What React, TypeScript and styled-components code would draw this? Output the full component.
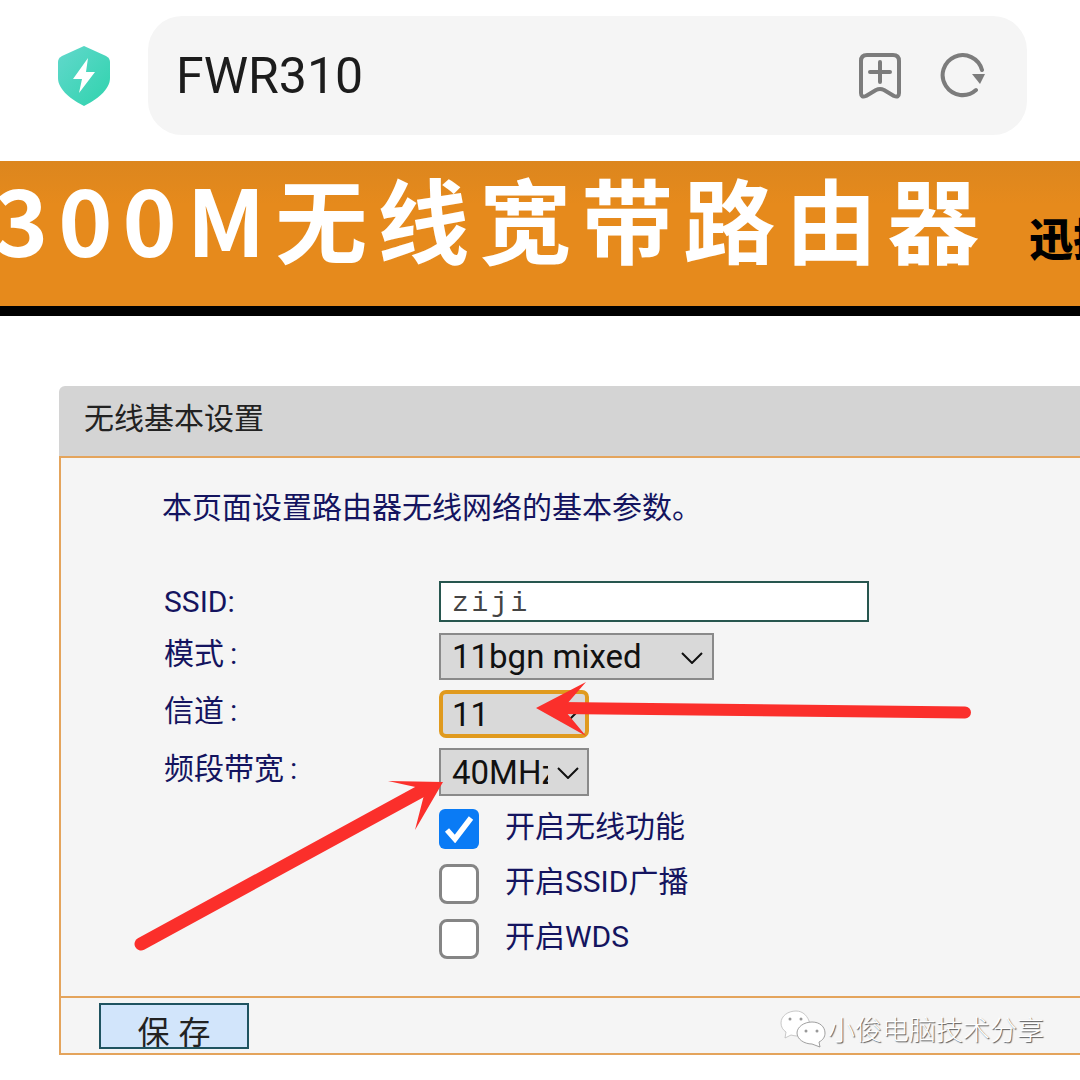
import React from "react";
import styled, { createGlobalStyle } from "styled-components";

const GlobalStyle = createGlobalStyle`
  html, body {
    margin: 0;
    padding: 0;
    background: #ffffff;
  }
  * {
    box-sizing: border-box;
  }
`;

const CJK = `"Roboto", "Noto Sans CJK SC", sans-serif`;

const Page = styled.div`
  position: relative;
  width: 1080px;
  height: 1080px;
  overflow: hidden;
  background: #ffffff;
  font-family: ${CJK};
`;

const AddressRow = styled.div`
  display: flex;
  align-items: center;
  padding: 16px 53px 0 58px;
`;

const ShieldSlot = styled.div`
  display: flex;
  width: 90px;
  flex: none;
`;

const AddressBar = styled.div`
  flex: 1;
  height: 119px;
  display: flex;
  align-items: center;
  padding: 0 41px 0 28px;
  background: #f5f5f5;
  border-radius: 34px;
`;

const AddressText = styled.div`
  flex: 1;
  font-size: 50px;
  color: #1c1c1c;
`;

const AddressIcons = styled.div`
  display: flex;
  align-items: center;
  gap: 38px;
`;

const Banner = styled.div`
  margin-top: 26px;
  height: 155px;
  padding-bottom: 33px;
  display: flex;
  align-items: center;
  background: linear-gradient(#dc861e, #e68a1c 30%);
  border-bottom: 10px solid #000000;
  white-space: nowrap;
  overflow: hidden;
`;

const BannerTitle = styled.div`
  margin-left: -6px;
  font-family: "Noto Sans CJK SC", sans-serif;
  font-size: 92px;
  line-height: 100px;
  font-weight: 700;
  letter-spacing: 10px;
  color: #ffffff;
  flex: none;
`;

const BannerBrand = styled.div`
  margin: 40px 0 0 40px;
  font-family: "Noto Sans CJK SC", sans-serif;
  font-size: 44px;
  line-height: 60px;
  font-weight: 900;
  color: #000000;
  flex: none;
`;

const Panel = styled.div`
  margin: 70px 0 0 59px;
  width: 1100px;
`;

const PanelTitle = styled.div`
  height: 70px;
  padding: 0 0 10px 25px;
  display: flex;
  align-items: center;
  background: #d4d4d4;
  border-radius: 6px 0 0 0;
  font-family: "Noto Sans CJK SC", sans-serif;
  font-size: 30px;
  color: #222222;
`;

const PanelBody = styled.div`
  height: 540px;
  padding: 30px 0 0 101px;
  background: #f5f5f5;
  border-left: 2px solid #e4a45c;
  border-top: 2px solid #e4a45c;
`;

const Intro = styled.div`
  height: 40px;
  line-height: 40px;
  font-size: 30px;
  color: #14145f;
`;

const Form = styled.div`
  margin-top: 53px;
  display: flex;
  flex-direction: column;
  margin-left: 1px;
`;

const Row = styled.div<{ $height: number; $gap: number }>`
  display: flex;
  align-items: center;
  height: ${(p) => p.$height}px;
  margin-bottom: ${(p) => p.$gap}px;
`;

const Label = styled.div<{ $lift?: number }>`
  width: 276px;
  flex: none;
  margin-top: ${(p) => p.$lift ?? 0}px;
  padding-left: 1px;
  font-size: 30px;
  color: #14145f;
`;

const TextField = styled.div`
  width: 430px;
  height: 41px;
  padding: 3px 0 0 11px;
  display: flex;
  align-items: center;
  background: #ffffff;
  border: 2px solid #27564f;
  font-family: "Liberation Mono", monospace;
  font-size: 28px;
  letter-spacing: 2.7px;
  color: #444444;
`;

const Select = styled.div<{ $width: number; $focus?: boolean }>`
  position: relative;
  width: ${(p) => p.$width}px;
  height: 100%;
  padding-left: ${(p) => (p.$focus ? "9px" : "11px")};
  display: flex;
  align-items: center;
  background: #d9d9d9;
  border: ${(p) => (p.$focus ? "4px solid #e09a1e" : "2px solid #8a8a8a")};
  border-radius: ${(p) => (p.$focus ? "7px" : "0")};
  font-size: 33px;
  color: #111111;
`;

const SelectValue = styled.div<{ $width: number }>`
  width: ${(p) => p.$width}px;
  overflow: hidden;
  white-space: nowrap;
`;

const Chevron = styled.svg<{ $right: number }>`
  position: absolute;
  right: ${(p) => p.$right}px;
  top: 50%;
  margin-top: -5px;
`;

const CheckRow = styled(Row)`
  padding-left: 276px;
`;

const Box = styled.div<{ $checked?: boolean }>`
  width: 40px;
  height: 40px;
  flex: none;
  display: flex;
  align-items: center;
  justify-content: center;
  background: ${(p) => (p.$checked ? "#0a7bf5" : "#ffffff")};
  border: ${(p) => (p.$checked ? "none" : "3px solid #858585")};
  border-radius: ${(p) => (p.$checked ? "6px" : "8px")};
`;

const CheckLabel = styled.div`
  margin: -10px 0 0 26px;
  font-size: 30px;
  color: #14145f;
`;

const PanelFooter = styled.div`
  height: 59px;
  padding: 5px 0 0 38px;
  background: #f5f5f5;
  border-left: 2px solid #e4a45c;
  border-top: 2px solid #e4a45c;
  border-bottom: 2px solid #e4a45c;
`;

const SaveButton = styled.div`
  width: 150px;
  height: 46px;
  padding: 2px 0 0 1px;
  overflow: hidden;
  text-align: center;
  background: #d2e5fb;
  border: 2px solid #1f5360;
  font-family: "Noto Sans CJK SC", sans-serif;
  font-size: 32px;
  line-height: 46px;
  letter-spacing: 1px;
  color: #222222;
  white-space: pre;
`;

const Annotation = styled.svg`
  position: absolute;
  left: 0;
  top: 0;
  pointer-events: none;
`;

const Watermark = styled.div`
  position: absolute;
  left: 780px;
  top: 1009px;
  display: flex;
  align-items: center;
  gap: 2px;
  font-family: "Noto Sans CJK SC", sans-serif;
  font-size: 27px;
  font-weight: 300;
  color: #ffffff;
  text-shadow: 1px 1px 1px #555555;
`;

const fields = [
  { label: "模式\u2009:", value: "11bgn mixed", width: 275, clip: 200, height: 47, gap: 10, right: 9 },
  { label: "信道\u2009:", value: "11", width: 150, clip: 90, height: 48, gap: 10, right: 5, focus: true },
  { label: "频段带宽\u2009:", value: "40MHz", width: 150, clip: 96, height: 48, gap: 13, right: 8 },
];

const checks = [
  { label: "开启无线功能", checked: true, gap: 15 },
  { label: "开启SSID广播", checked: false, gap: 15 },
  { label: "开启WDS", checked: false, gap: 0 },
];

const Shield = () => (
  <svg width="52" height="60" viewBox="0 0 52 60">
    <defs>
      <linearGradient id="shieldFill" x1="0" y1="0" x2="1" y2="1">
        <stop offset="0" stopColor="#62d8cc" />
        <stop offset="1" stopColor="#2fd3ad" />
      </linearGradient>
    </defs>
    <path
      d="M26 0 L48 10 Q52 12 52 16 L52 32 C52 44 38 54 26 60 C14 54 0 44 0 32 L0 16 Q0 12 4 10 Z"
      fill="url(#shieldFill)"
    />
    <path d="M30 12 L15 33 L24 33 L21 47 L37 26 L28 26 Z" fill="#ffffff" />
  </svg>
);

const BookmarkPlus = () => (
  <svg width="44" height="48" viewBox="0 0 44 48" fill="none" stroke="#7c7c7c" strokeWidth="4" strokeLinecap="round" strokeLinejoin="round">
    <path d="M9 3 L35 3 Q41 3 41 9 L41 41 Q41 46 36 44 L26 38 Q22 36 18 38 L8 44 Q3 46 3 41 L3 9 Q3 3 9 3 Z" />
    <path d="M12 20 L32 20 M22 10 L22 30" />
  </svg>
);

const Refresh = () => (
  <svg width="46" height="46" viewBox="0 0 46 46" fill="none">
    <path d="M36 37 A20 20 0 1 1 42 17" stroke="#7c7c7c" strokeWidth="4" strokeLinecap="round" />
    <path d="M32 21 L45 21 L40 31 Z" fill="#7c7c7c" />
  </svg>
);

const ChevronIcon = ({ right }: { right: number }) => (
  <Chevron $right={right} width="22" height="12" viewBox="0 0 22 12" fill="none" stroke="#111111" strokeWidth="2">
    <path d="M1 1 L11 11 L21 1" />
  </Chevron>
);

const WeChat = () => (
  <svg width="46" height="38" viewBox="0 0 46 38">
    <path
      d="M16 1 C8 1 1 6 1 13 C1 17 3 20 6 22 L5 28 L11 25 C13 25.5 15 26 17 26 L30 14 C28 6 23 1 16 1 Z"
      fill="#ffffff"
      stroke="#bbbbbb"
      strokeWidth="0.8"
    />
    <path
      d="M32 12 C24 12 17 17 17 23 C17 29 24 34 32 34 L40 37 L39 32 C43 30 45 27 45 23 C45 17 40 12 32 12 Z"
      fill="#ffffff"
      stroke="#888888"
      strokeWidth="0.8"
    />
    <circle cx="10" cy="9" r="1.5" fill="#999999" />
    <circle cx="21" cy="9" r="1.5" fill="#999999" />
    <circle cx="26" cy="21" r="1.5" fill="#999999" />
    <circle cx="37" cy="21" r="1.5" fill="#999999" />
  </svg>
);

const App: React.FC = () => {
  return (
    <Page>
      <GlobalStyle />
      <AddressRow>
        <ShieldSlot>
          <Shield />
        </ShieldSlot>
        <AddressBar>
          <AddressText>FWR310</AddressText>
          <AddressIcons>
            <BookmarkPlus />
            <Refresh />
          </AddressIcons>
        </AddressBar>
      </AddressRow>

      <Banner>
        <BannerTitle>300M无线宽带路由器</BannerTitle>
        <BannerBrand>迅捷网络</BannerBrand>
      </Banner>

      <Panel>
        <PanelTitle>无线基本设置</PanelTitle>
        <PanelBody>
          <Intro>本页面设置路由器无线网络的基本参数。</Intro>
          <Form>
            <Row $height={41} $gap={11}>
              <Label $lift={-1}>SSID:</Label>
              <TextField>ziji</TextField>
            </Row>
            {fields.map((f) => (
              <Row key={f.label} $height={f.height} $gap={f.gap}>
                <Label $lift={-12}>{f.label}</Label>
                <Select $width={f.width} $focus={f.focus}>
                  <SelectValue $width={f.clip}>{f.value}</SelectValue>
                  <ChevronIcon right={f.right} />
                </Select>
              </Row>
            ))}
            {checks.map((c) => (
              <CheckRow key={c.label} $height={40} $gap={c.gap}>
                <Box $checked={c.checked}>
                  {c.checked && (
                    <svg width="30" height="28" viewBox="0 0 30 28">
                      <path d="M3 15 L11 24 L27 3" fill="none" stroke="#ffffff" strokeWidth="5.5" />
                    </svg>
                  )}
                </Box>
                <CheckLabel>{c.label}</CheckLabel>
              </CheckRow>
            ))}
          </Form>
        </PanelBody>
        <PanelFooter>
          <SaveButton>保 存</SaveButton>
        </PanelFooter>
      </Panel>

      <Annotation width="1080" height="1080" viewBox="0 0 1080 1080">
        <path d="M560 708 L965 712.5" stroke="#fb2f2b" strokeWidth="12" strokeLinecap="round" />
        <path d="M536 708 L586 682 L566 705 L566 712 L586 736 Z" fill="#fb2f2b" />
        <path d="M141 944 L425 789" stroke="#fb2f2b" strokeWidth="13" strokeLinecap="round" />
        <path d="M443 782 L388 781 L420 788 L424 795 L415 830 Z" fill="#fb2f2b" />
      </Annotation>

      <Watermark>
        <WeChat />
        小俊电脑技术分享
      </Watermark>
    </Page>
  );
};

export default App;
